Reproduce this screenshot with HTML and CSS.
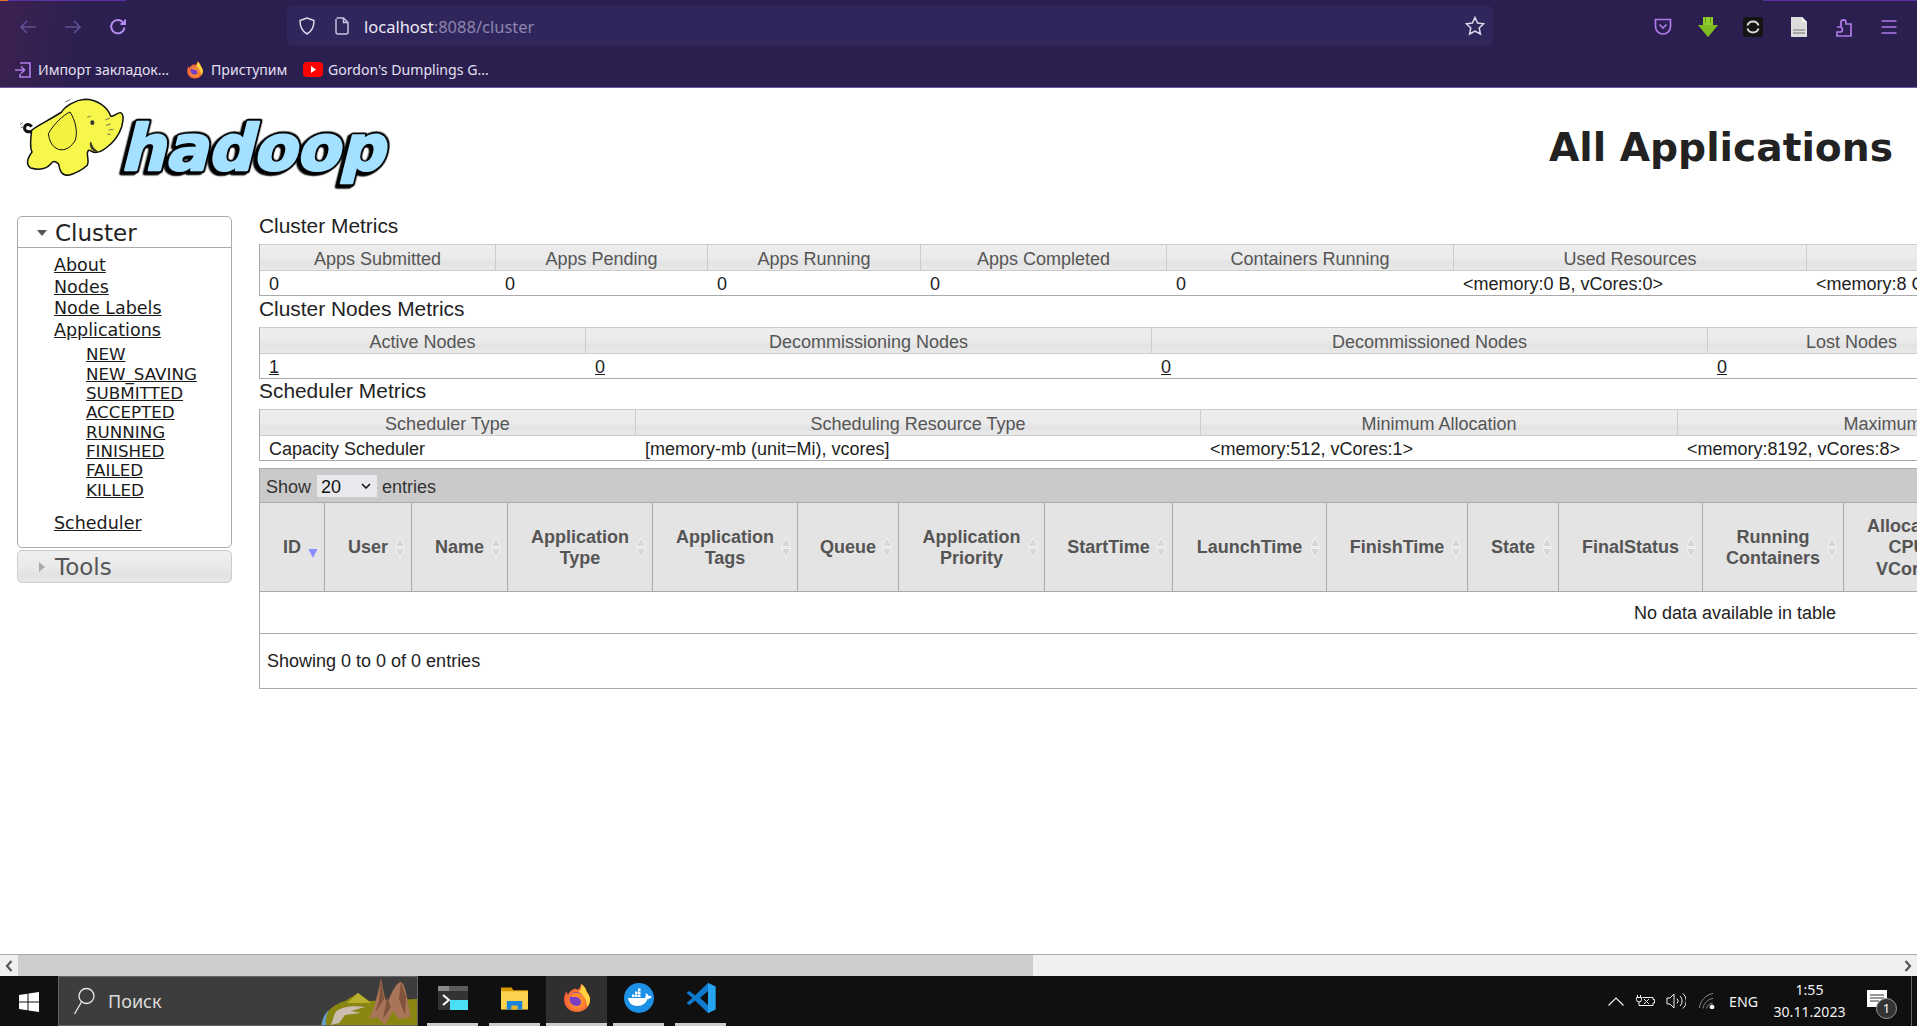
FILE: index.html
```html
<!DOCTYPE html>
<html lang="en">
<head>
<meta charset="utf-8">
<title>All Applications</title>
<link rel="stylesheet" href="styles.css">
</head>
<body>
<svg class="defs" width="0" height="0" aria-hidden="true">
  <defs>
    <symbol id="sort" viewBox="0 0 10 21"><path class="sort-a" d="M5 .5 L9.500 9.500 H.5 Z M.5 11.500 H9.500 L5 20.500 Z"/></symbol>
    <radialGradient id="ffg" cx="50%" cy="60%" r="60%"><stop offset="0" stop-color="#ffb52e"/><stop offset="1" stop-color="#f5453a"/></radialGradient>
    <symbol id="firefox" viewBox="0 0 30 30">
      <path fill="url(#ffg)" d="M15 29C7.500 29 2 23.500 2 16.500 2 13 3.200 10.500 4.500 8.500L6 12C7.500 8 11 6 13 5.500 16 8 18 6 19 1c3.500 2 5 5 5.500 7.500C27 11 28 14 28 16.500 28 23.500 22.500 29 15 29Z"/>
      <path fill="#ffd23f" d="M19 1c3.500 2 5 5 5.500 7.500 2 2.500 3.500 5.500 3.500 8 0 3-1 5.500-3 7.500 0-6-2-11-8-15 2-2 2.500-5 2-8Z"/>
      <circle cx="14.500" cy="16" r="7" fill="#7a3fc4"/>
      <path fill="#ff8a2b" d="M8 13c2-3 6-4 9-3 3 1 5 4 5 7 0 5-5 9-10 8 4 0 7-3 7-6 0-3-3-5-6-5-2 0-4 0-5-1Z"/>
    </symbol>
  </defs>
</svg>

<div class="app">
  <header class="chrome">
    <div class="strip"></div>
    <div class="nav-row">
      <svg class="ico dim" viewBox="0 0 18 18"><path d="M17 9H2M8 3 2 9l6 6"/></svg>
      <svg class="ico dim" viewBox="0 0 18 18"><path d="M1 9h15M10 3l6 6-6 6"/></svg>
      <svg class="ico lit" viewBox="0 0 18 18"><path d="M15.500 9.500A6.700 6.700 0 1 1 13.500 3.800L16 6M16 1.500V6h-4.500"/></svg>
      <div class="urlbar">
        <svg class="ico-url" viewBox="0 0 18 18"><path d="M9 1 2 3.500c0 6 1.500 10.500 7 13.500 5.500-3 7-7.500 7-13.500Z"/></svg>
        <svg class="ico-page" viewBox="0 0 16 18"><path d="M2.500 1h7L14 5.500V15a2 2 0 0 1-2 2H4a2 2 0 0 1-2-2V2M9.500 1v4.500H14"/></svg>
        <span class="url"><span class="url-host">localhost</span>:8088/cluster</span>
        <svg class="ico-star" viewBox="0 0 20 20"><path d="m10 1.500 2.600 5.600 6 .7-4.400 4.200 1.200 6L10 15l-5.400 3 1.200-6L1.400 7.800l6-.7Z"/></svg>
      </div>
      <div class="exts">
        <svg class="ext" viewBox="0 0 20 20"><path class="ln" d="M2.500 2.500h15v7a7.500 7.500 0 0 1-15 0ZM6.500 7.500 10 11l3.500-3.500"/></svg>
        <svg class="ext" viewBox="0 0 20 20"><path fill="#8fce2a" d="M5 0h10v8h5L10 20 0 8h5Z"/><path fill="#5f9a14" d="M7 0h1v6H7Zm5 0h1v6h-1Z"/><path fill="#6ea61a" d="M10 20 0 8h20Z" opacity=".5"/></svg>
        <svg class="ext" viewBox="0 0 20 20"><rect width="20" height="20" rx="3" fill="#141414"/><path fill="none" stroke="#d8d8d8" stroke-width="2" d="M4.500 8.500a5.800 5.800 0 0 1 11 0M15.500 11.500a5.800 5.800 0 0 1-11 0"/></svg>
        <svg class="ext" viewBox="0 0 20 20"><path fill="#dcdcdc" d="M2 0h11l5 5v15H2Z"/><path fill="#a8a8a8" d="M4 12h12v2H4Zm0 3h12v2H4Z"/><path fill="#f6f6f6" d="M13 0v5h5Z"/></svg>
        <svg class="ext" viewBox="0 0 20 20"><path class="ln" d="M3 10h4V6.500a2.500 2.500 0 0 1 0-1C7 2 12 2 12 5.500V7h5v12H3v-4h3a2.500 2.500 0 0 0 0-5Z"/></svg>
        <svg class="ext" viewBox="0 0 20 20"><path class="ln" d="M2.500 4h15M2.500 10h15M2.500 16h15"/></svg>
      </div>
    </div>
    <div class="bm-row">
      <span class="bm bm-1">
        <svg class="bm-ico" viewBox="0 0 18 18"><path class="ln" d="M6 2h10v14H6v-3M1 9h9M7 5.500 10.500 9 7 12.500"/></svg>
        Импорт закладок...
      </span>
      <span class="bm bm-2">
        <svg class="bm-ico"><use href="#firefox"/></svg>
        Приступим
      </span>
      <span class="bm bm-3">
        <svg class="bm-yt" viewBox="0 0 20 15"><rect width="20" height="15" rx="4" fill="#f00"/><path fill="#fff" d="m8 4 5 3.500L8 11Z"/></svg>
        Gordon's Dumplings G...
      </span>
    </div>
  </header>

  <div class="viewport">
    <div class="page">
      <div class="page-head">
        <svg class="logo" viewBox="0 0 1230 330" role="img" aria-label="Hadoop logo">
          <g transform="translate(360 241) skewX(-14)">
            <text class="logo-back" textLength="792" lengthAdjust="spacingAndGlyphs" aria-hidden="true">hadoop</text>
            <text class="logo-text" textLength="792" lengthAdjust="spacingAndGlyphs">hadoop</text>
          </g>
          <path class="el-tail" d="M95 124C82 128 72 122 74 112 76 102 88 100 95 110"/>
          <path class="el-body" d="M95 121C108 108 145 92 185 66 194 50 225 30 255 28 290 28 322 50 332 78 342 82 352 66 362 68 372 72 370 92 365 111 358 132 340 158 318 174 302 186 285 190 275 184 268 180 264 178 262 190 262 205 268 215 262 226 250 238 222 252 205 256 188 256 180 248 176 222 166 214 160 210 152 222 140 236 122 242 92 234 78 224 80 208 96 186 88 170 92 144 95 121Z"/>
          <path class="el-ear" d="M210 66C188 76 160 104 145 131 148 152 155 170 175 178 196 184 216 170 226 150 234 126 226 90 210 66Z"/>
          <path class="el-mouth" d="M272 156C268 170 276 186 292 184 282 178 276 168 272 156Z"/>
          <ellipse class="el-eye" cx="277" cy="98" rx="6" ry="7"/>
          <path class="el-ln" d="M262 82 272 78M316 90 330 84M318 106 332 102M326 120 340 118M322 132 332 134M196 36 212 28M60 104 68 98M62 114 70 110"/>
        </svg>
        <h1 class="title">All Applications</h1>
      </div>
      <div class="page-body">
        <nav class="side">
          <div class="acc acc-open">
            <div class="acc-head"><span class="tri-down"></span>Cluster</div>
            <ul class="menu">
              <li><a href="#">About</a></li>
              <li><a href="#">Nodes</a></li>
              <li><a href="#">Node Labels</a></li>
              <li><a href="#">Applications</a>
                <ul class="submenu">
                  <li><a href="#">NEW</a></li>
                  <li><a href="#">NEW_SAVING</a></li>
                  <li><a href="#">SUBMITTED</a></li>
                  <li><a href="#">ACCEPTED</a></li>
                  <li><a href="#">RUNNING</a></li>
                  <li><a href="#">FINISHED</a></li>
                  <li><a href="#">FAILED</a></li>
                  <li><a href="#">KILLED</a></li>
                </ul>
              </li>
              <li class="menu-last"><a href="#">Scheduler</a></li>
            </ul>
          </div>
          <div class="acc acc-closed"><span class="tri-right"></span>Tools</div>
        </nav>

        <main class="main">
          <h3 class="sec-title">Cluster Metrics</h3>
          <table class="metrics m1">
            <colgroup><col><col><col><col><col><col><col></colgroup>
            <thead><tr><th>Apps Submitted</th><th>Apps Pending</th><th>Apps Running</th><th>Apps Completed</th><th>Containers Running</th><th>Used Resources</th><th>Total Resources</th></tr></thead>
            <tbody><tr><td>0</td><td>0</td><td>0</td><td>0</td><td>0</td><td>&lt;memory:0 B, vCores:0&gt;</td><td>&lt;memory:8 GB, vCores:8&gt;</td></tr></tbody>
          </table>
          <h3 class="sec-title sec-b">Cluster Nodes Metrics</h3>
          <table class="metrics m2">
            <colgroup><col><col><col><col><col><col><col></colgroup>
            <thead><tr><th>Active Nodes</th><th>Decommissioning Nodes</th><th>Decommissioned Nodes</th><th>Lost Nodes</th><th>Unhealthy Nodes</th><th>Rebooted Nodes</th><th>Shutdown Nodes</th></tr></thead>
            <tbody><tr><td><a href="#">1</a></td><td><a href="#">0</a></td><td><a href="#">0</a></td><td><a href="#">0</a></td><td><a href="#">0</a></td><td><a href="#">0</a></td><td><a href="#">0</a></td></tr></tbody>
          </table>
          <h3 class="sec-title sec-c">Scheduler Metrics</h3>
          <table class="metrics m3">
            <colgroup><col><col><col><col><col></colgroup>
            <thead><tr><th>Scheduler Type</th><th>Scheduling Resource Type</th><th>Minimum Allocation</th><th>Maximum Allocation</th><th>Maximum Cluster Application Priority</th></tr></thead>
            <tbody><tr><td>Capacity Scheduler</td><td>[memory-mb (unit=Mi), vcores]</td><td>&lt;memory:512, vCores:1&gt;</td><td>&lt;memory:8192, vCores:8&gt;</td><td>0</td></tr></tbody>
          </table>

          <section class="dt">
            <div class="dt-top">
              Show
              <span class="sel-wrap">
                <select class="sel"><option>20</option><option>40</option><option>60</option></select>
                <svg class="sel-arrow" viewBox="0 0 10 6"><path d="M1 1l4 4 4-4"/></svg>
              </span>
              entries
            </div>
            <table class="dt-table">
              <colgroup><col><col><col><col><col><col><col><col><col><col><col><col><col><col><col><col><col><col><col><col><col><col><col><col></colgroup>
              <thead>
                <tr>
                  <th>ID<svg class="sort-on" viewBox="0 0 10 10"><path d="M0 0h10L5 10Z"/></svg></th>
                  <th>User<svg class="sort"><use href="#sort"/></svg></th>
                  <th>Name<svg class="sort"><use href="#sort"/></svg></th>
                  <th>Application<br>Type<svg class="sort"><use href="#sort"/></svg></th>
                  <th>Application<br>Tags<svg class="sort"><use href="#sort"/></svg></th>
                  <th>Queue<svg class="sort"><use href="#sort"/></svg></th>
                  <th>Application<br>Priority<svg class="sort"><use href="#sort"/></svg></th>
                  <th>StartTime<svg class="sort"><use href="#sort"/></svg></th>
                  <th>LaunchTime<svg class="sort"><use href="#sort"/></svg></th>
                  <th>FinishTime<svg class="sort"><use href="#sort"/></svg></th>
                  <th>State<svg class="sort"><use href="#sort"/></svg></th>
                  <th>FinalStatus<svg class="sort"><use href="#sort"/></svg></th>
                  <th>Running<br>Containers<svg class="sort"><use href="#sort"/></svg></th>
                  <th>Allocated<br>CPU<br>VCores<svg class="sort"><use href="#sort"/></svg></th>
                  <th>Allocated<br>Memory<br>MB<svg class="sort"><use href="#sort"/></svg></th>
                  <th>Allocated<br>GPUs<svg class="sort"><use href="#sort"/></svg></th>
                  <th>Reserved<br>CPU<br>VCores<svg class="sort"><use href="#sort"/></svg></th>
                  <th>Reserved<br>Memory<br>MB<svg class="sort"><use href="#sort"/></svg></th>
                  <th>Reserved<br>GPUs<svg class="sort"><use href="#sort"/></svg></th>
                  <th>% of<br>Queue<svg class="sort"><use href="#sort"/></svg></th>
                  <th>% of<br>Cluster<svg class="sort"><use href="#sort"/></svg></th>
                  <th>Progress<svg class="sort"><use href="#sort"/></svg></th>
                  <th>Tracking<br>UI<svg class="sort"><use href="#sort"/></svg></th>
                  <th>Blacklisted<br>Nodes<svg class="sort"><use href="#sort"/></svg></th>
                </tr>
              </thead>
              <tbody><tr><td colspan="24">No data available in table</td></tr></tbody>
            </table>
            <div class="dt-info">Showing 0 to 0 of 0 entries</div>
          </section>
        </main>
      </div>
    </div>
  </div>

  <div class="hscroll">
    <span class="hs-btn"><svg viewBox="0 0 8 12"><path d="M6.500 1 2 6l4.500 5"/></svg></span>
    <div class="hs-track"><div class="hs-thumb"></div></div>
    <span class="hs-btn"><svg viewBox="0 0 8 12"><path d="M1.500 1 6 6l-4.500 5"/></svg></span>
  </div>

  <footer class="taskbar">
    <div class="start">
      <svg class="win" viewBox="0 0 20 20"><path d="M0 3l8.500-1.300v7.800H0ZM9.500 1.600 20 0v9.500H9.500ZM0 10.500h8.500v7.800L0 17ZM9.500 10.500H20V20L9.500 18.400Z"/></svg>
    </div>
    <div class="search">
      <svg class="s-ico" viewBox="0 0 22 28"><circle cx="13.500" cy="9" r="7.500"/><path d="M8.500 15 1.500 27"/></svg>
      <span class="s-text">Поиск</span>
      <svg class="s-art" viewBox="0 0 96 48">
        <path fill="#8a8612" d="M0 48C2 38 10 28 24 24L37 16 48 24 96 22V48Z"/>
        <path fill="#b9b02e" d="M37 16 50 26H26Z"/>
        <path fill="#c9bdb0" d="M14 36C18 30 30 28 44 30L30 34 40 36 24 38 18 46 10 48Z"/>
        <path fill="#5f9fd6" d="M1 48C1 42 4 36 8 33 5 38 4 43 5 48Z"/>
        <path fill="#a87558" d="M48 42C54 30 58 12 60 1 62 10 63 20 66 26 70 18 74 6 80 5 85 8 86 22 90 40L78 42 72 34 64 48 56 40Z"/>
        <path fill="#7f533c" d="M60 1 58 24 54 36 63 22ZM80 5 78 22 84 38 85 20ZM66 20 62 42 70 30Z"/>
      </svg>
    </div>
    <div class="task t-a">
      <svg class="t-ico" viewBox="0 0 30 24"><rect width="30" height="24" rx="1" fill="#333"/><rect width="30" height="5" fill="#8a8a8a"/><rect x="11" width="19" height="5" fill="#5c5c5c"/><path d="M5 9l6 5-6 5" fill="none" stroke="#fff" stroke-width="2"/><rect x="12" y="14" width="18" height="10" fill="#4adff5"/></svg>
    </div>
    <div class="task t-b">
      <svg class="t-ico" viewBox="0 0 28 24"><path fill="#d99a00" d="M0 1h11l2 3h15v6H0Z"/><path fill="#fcd34f" d="M0 5h28v19H0Z"/><path fill="#1b84d8" d="M6 24V15h16v9h-5v-4h-6v4Z"/><rect x="11" y="20" width="6" height="4" fill="#e8b62c"/></svg>
    </div>
    <div class="task t-c"><svg class="t-ff"><use href="#firefox"/></svg></div>
    <div class="task t-d">
      <svg class="t-ff" viewBox="0 0 30 30"><ellipse cx="15" cy="15" rx="15" ry="15" fill="#1d91e6"/><path fill="#fff" d="M4 15h17c1-2 1-3 .500-5 1.500.500 2.500 1.500 3 3 1.500-.500 2.500 0 3 1-1 1.500-2.500 2-4 2-1.500 4-5 7-10 7-5 0-9-3-9.500-8Z"/><path fill="#fff" d="M8 11.500h2.500V14H8Zm3 0h2.500V14H11Zm3 0h2.500V14H14Zm-3-3h2.500V11H11Zm3 0h2.500V11H14Zm0-3h2.500V8H14Z"/></svg>
    </div>
    <div class="task t-e">
      <svg class="t-ff" viewBox="0 0 30 30"><path fill="#0e7bcf" fill-rule="evenodd" d="M22 0l7.500 3.500v23L22 30 9 17.500 3.500 22 .5 20l6-5-6-5 3-2L9 12.500ZM22 8l-8 7 8 7Z"/><path fill="#27a4ef" d="M22 0l7.500 3.500v23L22 30Z"/></svg>
    </div>
    <div class="tray">
      <svg class="tr-chev" viewBox="0 0 16 9"><path d="M.5 8.500 8 1l7.500 7.500"/></svg>
      <svg class="tr-bat" viewBox="0 0 19 12"><path d="M1.500 0v2.500M4.500 0v2.500M.5 2.500h5v2a2.500 2.500 0 0 1-5 0ZM3 7v3.500h14V8h1.500V4.500H17v-2H6.500M8 4l5 5M13 4l-5 5"/></svg>
      <svg class="tr-vol" viewBox="0 0 20 16"><path d="M1 5h3l4-4v14l-4-4H1ZM11 5.500a3.500 3.500 0 0 1 0 5M14 3a7 7 0 0 1 0 10M17 .5a10 10 0 0 1 0 15"/></svg>
      <svg class="tr-wifi" viewBox="0 0 16 16"><path class="dimln" d="M.5 15C1 8 7 1.500 14 .5M4 15.500C4.500 10.500 9 6 14 5.500M7.500 15.500c.5-2.800 2.800-5 6-5.500"/><circle cx="13" cy="14" r="2" fill="#fff"/></svg>
      <span class="tr-lang">ENG</span>
      <div class="clock"><span>1:55</span><span>30.11.2023</span></div>
      <div class="notif">
        <svg class="notif-ico" viewBox="0 0 20 17"><path fill="#fff" d="M0 0h20v17H0Z"/><path stroke="#333" d="M3 5h14M3 8h14M3 11h9"/></svg>
        <span class="badge">1</span>
      </div>
      <span class="desk-line"></span>
    </div>
  </footer>
</div>
</body>
</html>
```

FILE: styles.css
```css
* { box-sizing: border-box; }
html, body { margin: 0; height: 100%; overflow: hidden; background: #fff; }
body { font-family: "Liberation Sans", Arial, sans-serif; font-size: 18px; color: #222; }
.defs { position: absolute; }
.app { display: flex; flex-direction: column; height: 1026px; width: 1917px; }

/* Browser chrome */
.chrome {
  flex: none; height: 88px; position: relative;
  border-bottom: 1px solid #6d5aa3;
  background:
    linear-gradient(100deg, #3c2250 0, #2b1f50 90px),
    #2a1f50;
  font-family: "Noto Sans", "Open Sans", sans-serif;
  color: #e4e0f2;
}
.strip {
  height: 1px;
  background: linear-gradient(90deg, #e8702a 0 8px, #5b30a6 8px 126px, transparent 126px 1763px, #5b30a6 1763px);
}
.nav-row { display: flex; align-items: center; height: 52px; padding-left: 19px; }
.ico { width: 18px; height: 18px; flex: none; margin-right: 27px; fill: none; stroke-width: 1.600; }
.ico.dim { stroke: #5f4f96; }
.ico.lit { stroke: #b58bf0; stroke-width: 2; }
.urlbar {
  display: flex; align-items: center; flex: none;
  width: 1206px; height: 40px; margin-left: 133px; margin-top: -2px;
  padding: 0 8px 0 11px; border-radius: 5px; background: #30265c;
}
.ico-url { width: 18px; height: 18px; fill: none; stroke: #dcd8ea; stroke-width: 1.500; margin-right: 18px; }
.ico-page { width: 16px; height: 18px; fill: none; stroke: #c9c1e3; stroke-width: 1.500; margin-right: 14px; }
.url { font-size: 16.500px; color: #8d85ad; flex: 1; white-space: nowrap; }
.url-host { color: #ece9f6; }
.ico-star { width: 20px; height: 20px; fill: none; stroke: #dcd8ea; stroke-width: 1.500; }
.exts { display: flex; gap: 25.200px; margin-left: 160px; }
.ext { width: 20px; height: 20px; flex: none; }
.ln { fill: none; stroke: #b07ae8; stroke-width: 1.700; }
.bm-row { display: flex; align-items: center; height: 33px; padding-left: 14px; font-size: 14.100px; white-space: nowrap; }
.bm { display: flex; align-items: center; }
.bm-1 { gap: 6px; width: 172px; }
.bm-2 { gap: 7px; width: 117px; }
.bm-3 { gap: 5px; }
.bm-ico { width: 18px; height: 18px; flex: none; }
.bm-yt { width: 20px; height: 15px; flex: none; }

/* Page */
.viewport { flex: 1; min-height: 0; overflow: hidden; background: #fff; }
.page { width: 3300px; }
.page-head { display: flex; align-items: flex-start; height: 125px; width: 1917px; padding-top: 2px; }
.logo { width: 410px; height: 110px; flex: none; filter: blur(.35px); }
.logo-back, .logo-text { font-family: "DejaVu Sans", sans-serif; font-weight: 700; font-size: 190px; stroke-linejoin: round; }
.logo-back { fill: #000; stroke: #000; stroke-width: 19px; filter: drop-shadow(-7px 5px 0 #000); }
.logo-text { fill: #a4e0ff; stroke: #a4e0ff; stroke-width: 7px; }
.el-body, .el-ear { fill: #f7f64a; stroke: #111; stroke-width: 4.500; stroke-linejoin: round; }
.el-ear { fill: #f4f240; stroke-width: 3; }
.el-tail { fill: none; stroke: #111; stroke-width: 9; }
.el-ln { fill: none; stroke: #555; stroke-width: 2.500; }
.el-mouth { fill: #443; stroke: #111; stroke-width: 2; }
.el-eye { fill: #333; }
.title {
  margin: 32px 24px 0 auto; font-family: "DejaVu Sans", sans-serif; font-weight: 700;
  font-size: 39.200px; line-height: 52px; color: #222; white-space: nowrap;
}
.page-body { display: flex; align-items: flex-start; padding-left: 17px; }

/* Sidebar */
.side { width: 215px; flex: none; margin: 3px 27px 0 0; font-family: "DejaVu Sans", sans-serif; }
.acc-open { height: 332px; border: 1px solid #aaa; border-radius: 5px; }
.acc-head {
  display: flex; align-items: center; height: 31px; padding: 2px 0 0 19px;
  border-bottom: 1px solid #aaa; font-size: 23px; color: #222;
}
.tri-down { width: 0; height: 0; margin-right: 8px; border: 5px solid transparent; border-top: 6px solid #555; border-bottom: 0; }
.tri-right { width: 0; height: 0; margin-right: 10px; margin-left: 2px; border: 5px solid transparent; border-left: 6px solid #aaa; border-right: 0; }
.menu { list-style: none; margin: 0; padding: 7px 0 0 36px; font-size: 17.500px; line-height: 21.700px; }
.menu a { color: #1a1a1a; }
.submenu { list-style: none; margin: 3.500px 0 0; padding: 0 0 0 32px; font-size: 16.700px; line-height: 19.350px; }
.menu-last { margin-top: 12.500px; }
.acc-closed {
  display: flex; align-items: center; height: 33px; margin-top: 2px; padding-left: 19px;
  border: 1px solid #ccc; border-radius: 5px; font-size: 23px; color: #555;
  background: linear-gradient(#efefef, #e9e9e9 55%, #e2e2e2 75%, #e8e8e8);
}

/* Metrics */
.main { width: 2950px; flex: none; }
.sec-title { margin: 0; height: 31px; font-size: 20.900px; font-weight: 400; line-height: 26px; color: #222; }
.sec-b { height: 31px; line-height: 26px; }
.sec-c { height: 30px; line-height: 24px; }
.metrics {
  table-layout: fixed; border-collapse: separate; border-spacing: 0;
  border-left: 1px solid #aaa;
}
.metrics th {
  height: 27px; padding: 2px 0 0; font-weight: 400; color: #555; text-align: center;
  border-top: 1px solid #ccc; border-bottom: 1px solid #ccc; border-right: 1px solid #ccc;
  background: linear-gradient(#ededed, #ebebeb 50%, #e3e3e3 70%, #e9e9e9);
  line-height: 20px; white-space: nowrap;
}
.metrics td {
  height: 25px; padding: 2px 0 0 9px; border-bottom: 1px solid #aaa; color: #222;
  line-height: 20px; white-space: nowrap;
}
.metrics a { color: #222; }
.m1 { width: 2400px; }
.m1 col:nth-child(1) { width: 236px; }
.m1 col:nth-child(2) { width: 212px; }
.m1 col:nth-child(3) { width: 213px; }
.m1 col:nth-child(4) { width: 246px; }
.m1 col:nth-child(5) { width: 287px; }
.m1 col:nth-child(6) { width: 353px; }
.m2 { width: 2600px; }
.m2 col:nth-child(1) { width: 326px; }
.m2 col:nth-child(2) { width: 566px; }
.m2 col:nth-child(3) { width: 556px; }
.m2 col:nth-child(4) { width: 288px; }
.m2 col:nth-child(n+5) { width: 288px; }
.m3 { width: 2400px; }
.m3 col:nth-child(1) { width: 376px; }
.m3 col:nth-child(2) { width: 565px; }
.m3 col:nth-child(3) { width: 477px; }
.m3 col:nth-child(4) { width: 492px; }
.m3 col:nth-child(5) { width: 490px; }

/* Data table */
.dt { width: 2950px; margin-top: 7px; border-left: 1px solid #aaa; border-top: 1px solid #aaa; border-bottom: 1px solid #aaa; }
.dt-top {
  display: flex; align-items: center; height: 34px; padding: 4px 0 0 6px; gap: 5px;
  background: #cacaca; border-bottom: 1px solid #aaa; color: #333;
}
.sel-wrap { position: relative; display: block; width: 60px; height: 22px; margin: -4px 0 0 1px; }
.sel {
  appearance: none; display: block; width: 60px; height: 22px; padding: 2px 0 0 4px; border: 0; border-radius: 0;
  background: #e9e9ed; color: #111; font: 18px "Liberation Sans", Arial, sans-serif;
}
.sel-arrow { position: absolute; right: 6px; top: 8px; width: 10px; height: 6px; fill: none; stroke: #111; stroke-width: 1.500; pointer-events: none; }
.dt-table { table-layout: fixed; border-collapse: separate; border-spacing: 0; width: 2949px; }
.dt-table th {
  position: relative; height: 89px; padding: 2px 0 0; font-weight: 700; color: #555; text-align: center;
  line-height: 21.500px; background: #e4e4e4; border-right: 1px solid #aaa; border-bottom: 1px solid #aaa;
}
.dt-table td {
  height: 42px; padding: 2px 0 0; text-align: center; border-bottom: 1px solid #aaa; color: #222;
}
.sort { position: absolute; right: 6px; top: 34px; width: 10px; height: 21px; }
.sort-a { fill: #d6d6d6; stroke: #f2f2f2; stroke-width: 1; }
.sort-on { position: absolute; right: 6px; top: 46px; width: 10px; height: 9px; fill: #8a8cff; }
.dt-table col:nth-child(1) { width: 65px; }
.dt-table col:nth-child(2) { width: 87px; }
.dt-table col:nth-child(3) { width: 96px; }
.dt-table col:nth-child(4) { width: 145px; }
.dt-table col:nth-child(5) { width: 145px; }
.dt-table col:nth-child(6) { width: 101px; }
.dt-table col:nth-child(7) { width: 146px; }
.dt-table col:nth-child(8) { width: 128px; }
.dt-table col:nth-child(9) { width: 154px; }
.dt-table col:nth-child(10) { width: 141px; }
.dt-table col:nth-child(11) { width: 91px; }
.dt-table col:nth-child(12) { width: 144px; }
.dt-table col:nth-child(13) { width: 141px; }
.dt-table col:nth-child(14) { width: 128px; }
.dt-table col:nth-child(n+15) { width: 123.800px; }
.dt-info { display: flex; align-items: center; height: 54px; padding-left: 7px; color: #222; }

/* Horizontal scrollbar */
.hscroll { flex: none; display: flex; height: 22px; border-top: 1px solid #aaa; background: #f0f0f0; }
.hs-btn { display: flex; align-items: center; justify-content: center; width: 18px; flex: none; }
.hs-btn svg { width: 8px; height: 12px; fill: none; stroke: #555; stroke-width: 2.200; }
.hs-track { flex: 1; }
.hs-thumb { width: 1015px; height: 100%; background: #cdcdcd; }

/* Taskbar */
.taskbar { flex: none; display: flex; height: 50px; background: #101010; color: #f0f0f0; font-family: "Noto Sans", "Open Sans", sans-serif; }
.start { display: flex; align-items: center; justify-content: center; width: 58px; flex: none; }
.win { width: 20px; height: 20px; margin-top: 1px; fill: #fff; }
.search {
  position: relative; display: flex; align-items: center; width: 360px; flex: none; margin-right: 9px;
  padding-left: 14px; overflow: hidden;
  background: #3d3d3d; border: 1px solid #646464;
}
.s-ico { width: 22px; height: 28px; fill: none; stroke: #e8e8e8; stroke-width: 1.300; margin-right: 13px; flex: none; }
.s-text { font-size: 18px; color: #dcdcdc; }
.s-art { position: absolute; right: 0; top: 0; width: 96px; height: 48px; }
.task { display: flex; align-items: center; justify-content: center; flex: none; height: 50px; width: 51px; padding-bottom: 3px; border-bottom: 3px solid #ccc; }
.t-a, .t-d { margin-right: 11px; }
.t-b, .t-c { margin-right: 6px; }
.t-c { width: 61px; background: #2f2f2f; }
.t-ico { width: 30px; height: 24px; }
.t-b .t-ico { width: 27px; }
.t-ff { width: 30px; height: 30px; }
.tray { display: flex; align-items: center; margin-left: auto; padding-right: 5px; }
.tr-chev { width: 16px; height: 9px; fill: none; stroke: #f0f0f0; stroke-width: 1.200; margin-right: 12px; }
.tr-bat { width: 19px; height: 12px; fill: none; stroke: #f0f0f0; stroke-width: 1; margin-right: 11px; }
.tr-vol { width: 20px; height: 16px; fill: none; stroke: #f0f0f0; stroke-width: 1; margin-right: 13px; }
.tr-wifi { width: 16px; height: 16px; fill: none; stroke: #f0f0f0; stroke-width: 1; margin-right: 14px; }
.dimln { stroke: #8a8a8a; }
.tr-lang { width: 29px; font-size: 14.200px; margin-right: 17px; }
.clock { display: flex; flex-direction: column; align-items: center; width: 69px; font-size: 14.100px; line-height: 22px; }
.notif { position: relative; width: 20px; height: 17px; margin: -6px 0 0 23px; }
.notif-ico { display: block; width: 20px; height: 17px; }
.badge {
  position: absolute; left: 9px; top: 8px; width: 21px; height: 21px; border-radius: 50%;
  display: flex; align-items: center; justify-content: center;
  background: #333; border: 1px solid #999; color: #fff; font-size: 13px;
}
.desk-line { width: 1px; height: 50px; background: #666; margin-left: 24px; }
```
